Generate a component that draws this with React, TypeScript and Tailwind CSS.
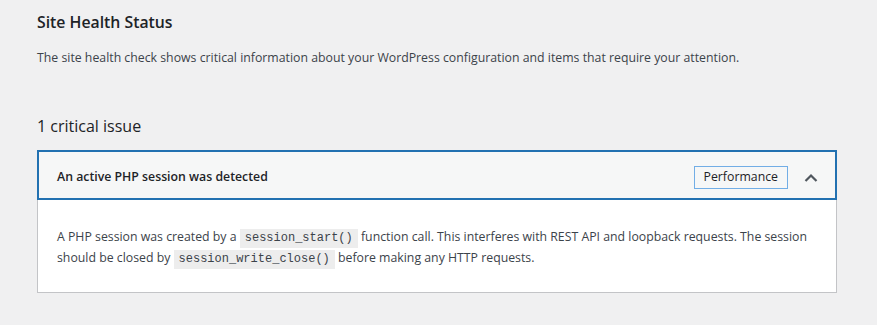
export default function App() {
  const sans = { fontFamily: '"Open Sans", "Noto Sans", sans-serif' }
  const mono = { fontFamily: '"Liberation Mono", monospace' }
  return (
    <div className="min-h-[325px] w-full bg-[#f0f0f1] pl-[37px] pt-[9px]" style={sans}>
      <div className="w-[800px]">
        <h2 className="text-[15.8px] leading-[27px] font-semibold text-[#1d2327]">Site Health Status</h2>
        <p className="mt-[12px] text-[12.3px] leading-[20px] text-[#3c434a]">
          The site health check shows critical information about your WordPress configuration and items that require your attention.
        </p>

        <h3 className="mt-[45px] text-[16px] leading-[27px] font-normal text-[#1d2327]">1 critical issue</h3>

        <div className="mt-[10px] bg-white">
          <div className="flex h-[50px] items-center justify-between border-2 border-[#2271b1] bg-[#f6f7f7] pl-[18px] pr-[16px] pt-[5px]">
            <span className="text-[12.3px] font-semibold text-[#1d2327]">An active PHP session was detected</span>
            <div className="flex items-center gap-[15px]">
              <span className="flex h-[23px] items-center border border-[#72aee6] px-[9px] text-[12.3px] text-[#1d2327]">
                Performance
              </span>
              <svg width="16" height="16" viewBox="0 0 16 16" className="text-[#50575e]">
                <path d="M2.5 11 L8 5.5 L13.5 11" fill="none" stroke="currentColor" strokeWidth="2.2" />
              </svg>
            </div>
          </div>
          <div className="border border-t-0 border-[#c3c4c7] px-[19px] pt-[27px] pb-[23px] text-[12.3px] leading-[20px] text-[#3c434a]">
            A PHP session was created by a{" "}
            <code className="inline-block bg-[#ededed] px-[5px] text-[12px] leading-[19px] align-baseline" style={mono}>
              session_start()
            </code>{" "}
            function call. This interferes with REST API and loopback requests. The session should be closed by{" "}
            <code className="inline-block bg-[#ededed] px-[5px] text-[12px] leading-[19px] align-baseline" style={mono}>
              session_write_close()
            </code>{" "}
            before making any HTTP requests.
          </div>
        </div>
      </div>
    </div>
  )
}
